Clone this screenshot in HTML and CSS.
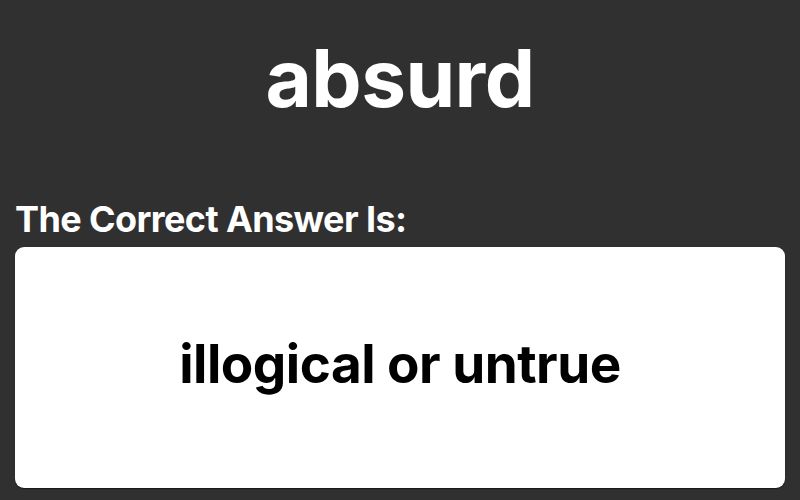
FILE: index.html
```html
<!DOCTYPE html>
<html>
<head>
<meta charset="utf-8">
<link rel="stylesheet" href="styles.css">
</head>
<body>
<div class="page">
  <h1 class="word">absurd</h1>
  <h2 class="label">The Correct Answer Is:</h2>
  <div class="card">
    <p class="answer">illogical or untrue</p>
  </div>
</div>
</body>
</html>
```

FILE: styles.css
```css
html, body {
  margin: 0;
  padding: 0;
  background: #303030;
  width: 800px;
  height: 500px;
  overflow: hidden;
}
.page {
  font-family: Inter, "Liberation Sans", sans-serif;
  padding: 30px 15px 0 15px;
  display: flex;
  flex-direction: column;
}
.word {
  margin: 0;
  text-align: center;
  color: #fff;
  font-size: 80px;
  font-weight: 700;
  line-height: 96px;
  letter-spacing: -0.6px;
}
.label {
  margin: 71px 0 0 0;
  color: #fff;
  font-size: 36px;
  font-weight: 700;
  line-height: 44px;
  letter-spacing: -0.6px;
}
.card {
  margin-top: 6px;
  background: #fff;
  border-radius: 9px;
  height: 241px;
  box-sizing: border-box;
  padding-bottom: 8px;
  display: flex;
  align-items: center;
  justify-content: center;
  box-shadow: 0 1px 1px rgba(0,0,0,0.5);
}
.answer {
  margin: 0;
  color: #000;
  font-size: 53px;
  font-weight: 700;
  letter-spacing: -0.5px;
}
```
